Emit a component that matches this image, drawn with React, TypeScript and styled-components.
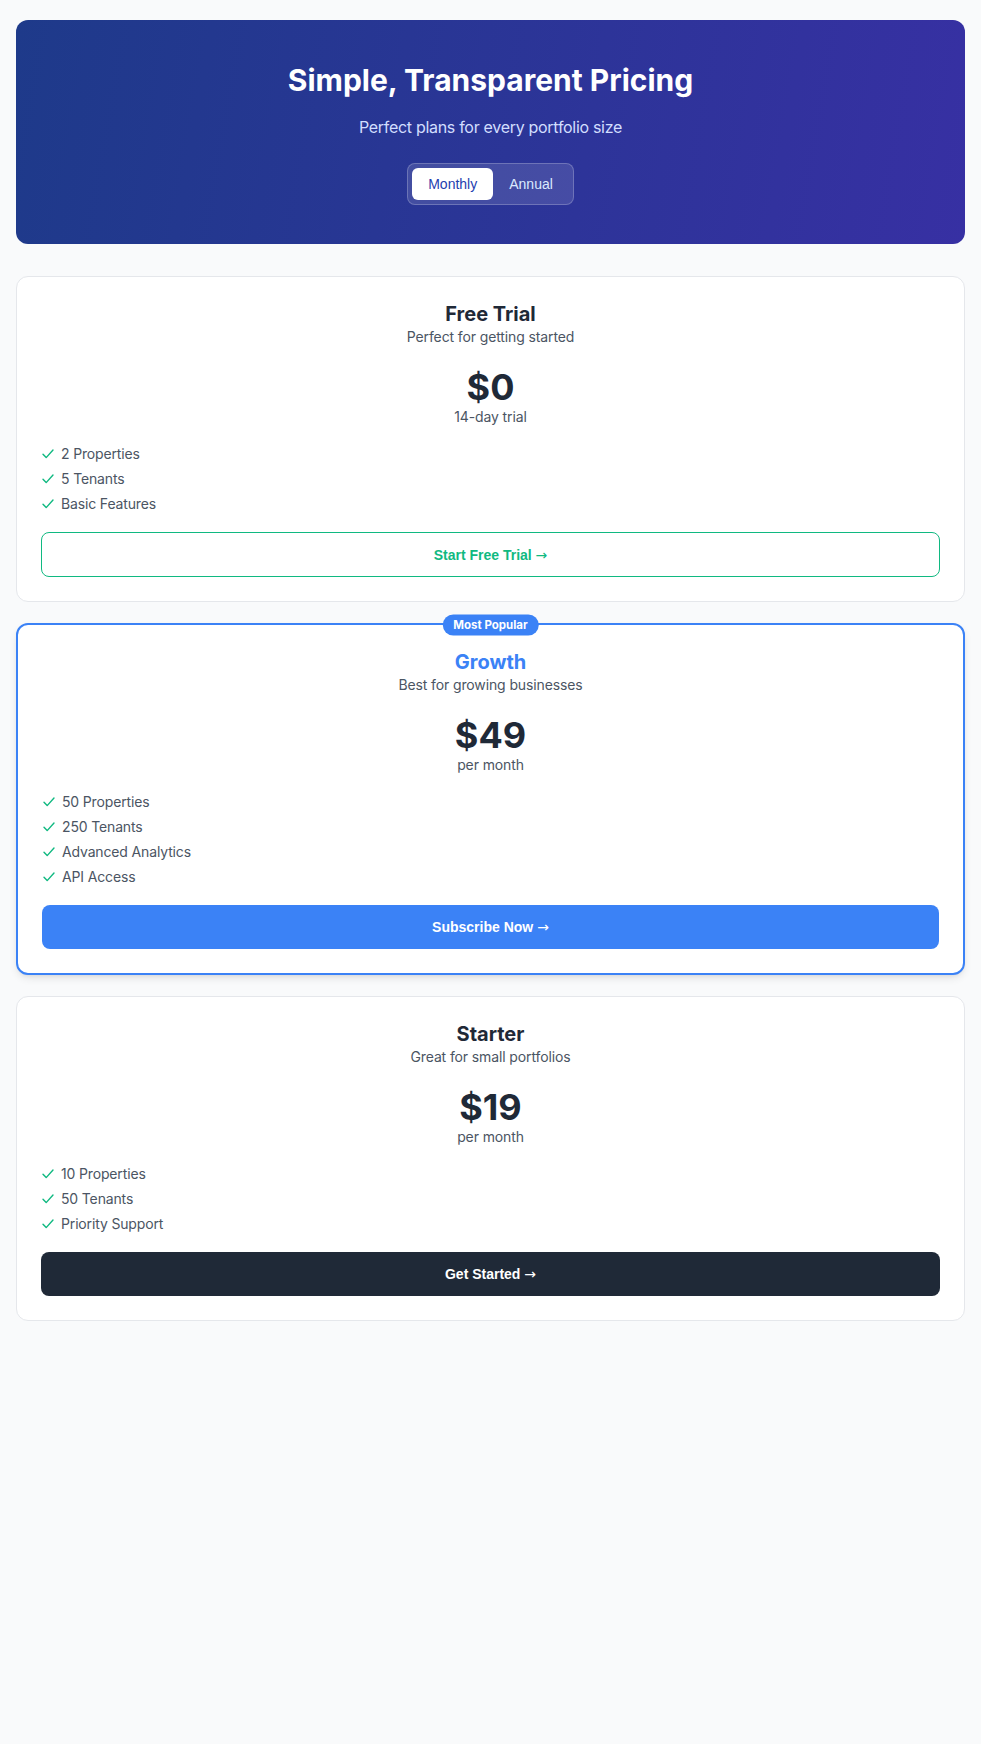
import React, { useState } from "react";
import styled, { createGlobalStyle, css } from "styled-components";

const GlobalStyle = createGlobalStyle`
  html, body { margin: 0; padding: 0; background: #f9fafb; }
  body { font-family: Inter, "Noto Sans", sans-serif; color: #1f2937; }
  * { box-sizing: border-box; }
`;

const Page = styled.div`
  min-height: 1744px;
  background: #f9fafb;
  padding: 20px 16px 40px;
`;

const Hero = styled.header`
  background: linear-gradient(100deg, #1e3a8a 0%, #3730a3 100%);
  border-radius: 12px;
  padding: 42px 24px 0;
  text-align: center;
  height: 224px;
`;

const HeroTitle = styled.h1`
  margin: 0 0 16px;
  font-size: 30px;
  line-height: 36px;
  font-weight: 700;
  color: #ffffff;
`;

const HeroSub = styled.p`
  margin: 0 0 23px;
  font-size: 16px;
  line-height: 26px;
  letter-spacing: -0.3px;
  color: #d2defe;
`;

const Toggle = styled.div`
  display: inline-flex;
  padding: 4px;
  border-radius: 8px;
  background: rgba(255, 255, 255, 0.12);
  border: 1px solid rgba(255, 255, 255, 0.22);
`;

const ToggleBtn = styled.button<{ $active: boolean }>`
  font-family: "Liberation Sans", Arial, sans-serif;
  font-size: 14px;
  line-height: 16px;
  padding: 8px 16px;
  border: none;
  border-radius: 6px;
  cursor: pointer;
  ${(p) =>
    p.$active
      ? css`
          background: #ffffff;
          color: #1e40af;
        `
      : css`
          background: transparent;
          color: #dbeafe;
        `}
`;

const Cards = styled.div`
  margin-top: 32px;
  display: flex;
  flex-direction: column;
  gap: 21px;
`;

const Card = styled.section<{ $featured?: boolean }>`
  position: relative;
  background: #ffffff;
  border-radius: 12px;
  padding: 24px;
  ${(p) =>
    p.$featured
      ? css`
          border: 2px solid #3b82f6;
          box-shadow: 0 4px 10px -2px rgba(0, 0, 0, 0.12), 0 2px 4px -2px rgba(0, 0, 0, 0.08);
        `
      : css`
          border: 1px solid #e5e7eb;
        `}
`;

const Badge = styled.span`
  position: absolute;
  top: 0;
  left: 50%;
  transform: translate(-50%, -50%);
  background: #3b82f6;
  color: #ffffff;
  font-size: 11.5px;
  line-height: 21px;
  font-weight: 700;
  padding: 0 11px;
  border-radius: 999px;
  white-space: nowrap;
`;

const CardHead = styled.div`
  text-align: center;
`;

const PlanName = styled.h2<{ $accent?: boolean }>`
  margin: 0;
  font-size: 20px;
  line-height: 26px;
  font-weight: 700;
  color: ${(p) => (p.$accent ? "#3b82f6" : "#1f2937")};
`;

const PlanDesc = styled.p`
  margin: 0;
  font-size: 14px;
  line-height: 20px;
  letter-spacing: -0.12px;
  color: #4b5563;
`;

const Price = styled.div`
  margin-top: 20px;
  font-size: 36px;
  line-height: 40px;
  font-weight: 700;
  color: #1f2937;
`;

const Period = styled.div`
  font-size: 14px;
  line-height: 20px;
  letter-spacing: -0.12px;
  color: #4b5563;
`;

const Features = styled.ul`
  list-style: none;
  margin: 14px 0 0;
  padding: 0;
`;

const Feature = styled.li`
  display: flex;
  align-items: center;
  gap: 7px;
  height: 25px;
  font-size: 14px;
  letter-spacing: -0.15px;
  color: #4b5563;
`;

const CheckIcon = styled.svg`
  width: 12px;
  height: 10px;
  flex: none;
  margin-left: 1px;
`;

const Arrow = styled.span`
  font-family: "DejaVu Sans", sans-serif;
  font-weight: 400;
  font-size: 14px;
`;

type Variant = "outline" | "primary" | "dark";

const ActionBtn = styled.button<{ $variant: Variant }>`
  margin-top: 16px;
  width: 100%;
  height: 44px;
  border-radius: 8px;
  font-family: "Liberation Sans", Arial, sans-serif;
  font-size: 14px;
  font-weight: 700;
  cursor: pointer;
  ${(p) =>
    p.$variant === "outline"
      ? css`
          height: 45px;
          background: #ffffff;
          border: 1px solid #10b981;
          color: #10b981;
        `
      : p.$variant === "primary"
      ? css`
          background: #3b82f6;
          border: none;
          color: #ffffff;
        `
      : css`
          background: #1f2937;
          border: none;
          color: #ffffff;
        `}
`;

const Check = () => (
  <CheckIcon viewBox="0 0 12 10" fill="none">
    <path d="M1 5.2 L4.2 8.6 L11 1" stroke="#10b981" strokeWidth="1.4" strokeLinecap="round" strokeLinejoin="round" />
  </CheckIcon>
);

type Plan = {
  name: string;
  desc: string;
  price: string;
  period: string;
  features: string[];
  cta: string;
  variant: Variant;
  featured?: boolean;
};

const plans: Plan[] = [
  {
    name: "Free Trial",
    desc: "Perfect for getting started",
    price: "$0",
    period: "14-day trial",
    features: ["2 Properties", "5 Tenants", "Basic Features"],
    cta: "Start Free Trial",
    variant: "outline",
  },
  {
    name: "Growth",
    desc: "Best for growing businesses",
    price: "$49",
    period: "per month",
    features: ["50 Properties", "250 Tenants", "Advanced Analytics", "API Access"],
    cta: "Subscribe Now",
    variant: "primary",
    featured: true,
  },
  {
    name: "Starter",
    desc: "Great for small portfolios",
    price: "$19",
    period: "per month",
    features: ["10 Properties", "50 Tenants", "Priority Support"],
    cta: "Get Started",
    variant: "dark",
  },
];

export default function App() {
  const [billing, setBilling] = useState<"monthly" | "annual">("monthly");
  return (
    <Page>
      <GlobalStyle />
      <Hero>
        <HeroTitle>Simple, Transparent Pricing</HeroTitle>
        <HeroSub>Perfect plans for every portfolio size</HeroSub>
        <Toggle>
          <ToggleBtn $active={billing === "monthly"} onClick={() => setBilling("monthly")}>
            Monthly
          </ToggleBtn>
          <ToggleBtn $active={billing === "annual"} onClick={() => setBilling("annual")}>
            Annual
          </ToggleBtn>
        </Toggle>
      </Hero>
      <Cards>
        {plans.map((p) => (
          <Card key={p.name} $featured={p.featured}>
            {p.featured && <Badge>Most Popular</Badge>}
            <CardHead>
              <PlanName $accent={p.featured}>{p.name}</PlanName>
              <PlanDesc>{p.desc}</PlanDesc>
              <Price>{p.price}</Price>
              <Period>{p.period}</Period>
            </CardHead>
            <Features>
              {p.features.map((f) => (
                <Feature key={f}>
                  <Check />
                  {f}
                </Feature>
              ))}
            </Features>
            <ActionBtn $variant={p.variant}>
              {p.cta} <Arrow>→</Arrow>
            </ActionBtn>
          </Card>
        ))}
      </Cards>
    </Page>
  );
}
